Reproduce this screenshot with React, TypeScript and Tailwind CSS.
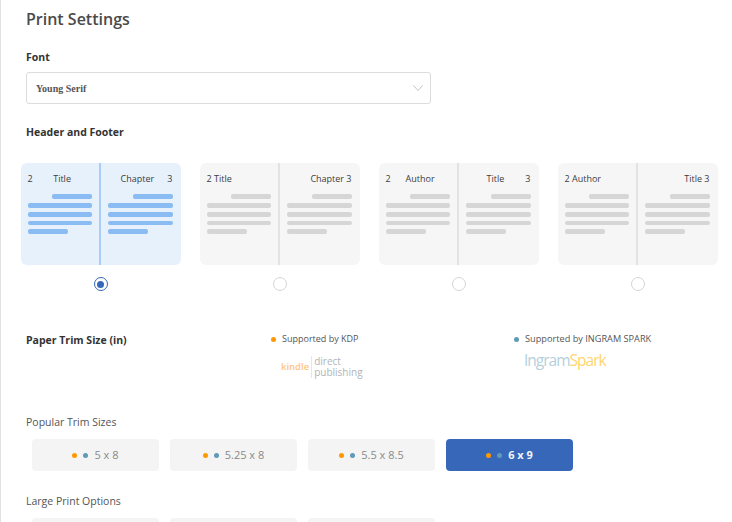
const font = { fontFamily: '"Open Sans", "Noto Sans", sans-serif' };

function Page({ side, a, b, c, bar }: { side: "l" | "r"; a: string; b: string; c: string; bar: string }) {
  const line = `h-[5px] rounded-[2px] ${bar}`;
  return (
    <div className={`flex flex-col ${side === "l" ? "w-[64px]" : "w-[65px]"}`}>
      <div className="flex h-[16px] items-center justify-between text-[9px] leading-none text-[#3d3d3d]">
        <span>{a}</span>
        <span>{b}</span>
        <span>{c}</span>
      </div>
      <div className="mt-[8px] flex flex-col gap-[4px]">
        <div className={`${line} ml-auto w-[40px]`} />
        <div className={line} />
        <div className={line} />
        <div className={`h-[4px] rounded-[2px] ${bar}`} />
        <div className={`${line} w-[40px]`} />
      </div>
    </div>
  );
}

function Card({ left, right, active }: { left: [string, string, string]; right: [string, string, string]; active?: boolean }) {
  const bar = active ? "bg-[#8abbf3]" : "bg-[#d6d6d6]";
  return (
    <div className="flex w-[160px] flex-col items-center">
      <div className={`flex h-[102px] w-[160px] rounded-[6px] ${active ? "bg-[#e6f1fc]" : "bg-[#f6f6f6]"}`}>
        <div className="flex w-[78px] justify-end pr-[7px] pt-[7px]">
          <Page side="l" a={left[0]} b={left[1]} c={left[2]} bar={bar} />
        </div>
        <div className={`w-[2px] ${active ? "bg-[#a9cdf5]" : "bg-[#e3e3e3]"}`} />
        <div className="flex flex-1 pl-[7px] pt-[7px]">
          <Page side="r" a={right[0]} b={right[1]} c={right[2]} bar={bar} />
        </div>
      </div>
      <div className={`mt-[12px] flex h-[14px] w-[14px] items-center justify-center rounded-full border ${active ? "border-[#3667b8]" : "border-[#d4d4d4]"}`}>
        {active && <div className="h-[7px] w-[7px] rounded-full bg-[#3667b8]" />}
      </div>
    </div>
  );
}

function Trim({ label, active, bare }: { label?: string; active?: boolean; bare?: boolean }) {
  return (
    <div className={`flex h-[32px] w-[127px] items-center justify-center rounded-[4px] ${active ? "bg-[#3667b8]" : "bg-[#f4f4f4]"}`}>
      {!bare && (
        <>
          <span className="h-[5px] w-[5px] rounded-full bg-[#ff9900]" />
          <span className="ml-[6px] h-[5px] w-[5px] rounded-full bg-[#5f9ab8]" />
          <span className={`ml-[6px] text-[11px] ${active ? "font-bold text-[#f0f4fb]" : "text-[#8a8a8a]"}`}>{label}</span>
        </>
      )}
    </div>
  );
}

export default function App() {
  return (
    <div style={font} className="h-[522px] w-[732px] overflow-hidden border-l border-[#e2e2e2] bg-white text-[#333]">
      <h1 className="ml-[25px] mt-[8px] text-[16px] font-semibold leading-[22px] text-[#4a4a4a]">Print Settings</h1>

      <p className="ml-[25px] mt-[19px] text-[10.5px] font-bold leading-[16px] text-[#333]">Font</p>
      <div className="ml-[25px] mt-[7px] flex h-[32px] w-[405px] items-center justify-between rounded-[3px] border border-[#dcdcdc] pl-[9px] pr-[7px]">
        <span className="text-[10px] font-bold text-[#555]" style={{ fontFamily: '"Liberation Serif", serif' }}>Young Serif</span>
        <svg width="10" height="6" viewBox="0 0 10 6" fill="none" stroke="#c4c4c4" strokeWidth="1">
          <path d="M0.5 0.5 L5 5.5 L9.5 0.5" />
        </svg>
      </div>

      <p className="ml-[25px] mt-[20px] text-[10.5px] font-bold leading-[16px] text-[#333]">Header and Footer</p>

      <div className="ml-[19.5px] mt-[23px] flex gap-[19px]">
        <Card active left={["2", "Title", ""]} right={["", "Chapter", "3"]} />
        <Card left={["2 Title", "", ""]} right={["", "", "Chapter 3"]} />
        <Card left={["2", "Author", ""]} right={["", "Title", "3"]} />
        <Card left={["2 Author", "", ""]} right={["", "", "Title 3"]} />
      </div>

      <div className="mt-[41px] flex h-[48px]">
        <p className="ml-[25px] w-[245px] text-[10.5px] font-bold leading-[16px] text-[#333]">Paper Trim Size (in)</p>
        <div className="w-[243px]">
          <div className="flex h-[14px] items-center">
            <span className="h-[5px] w-[5px] rounded-full bg-[#ff9900]" />
            <span className="ml-[6px] text-[9px] text-[#555]">Supported by KDP</span>
          </div>
          <div className="ml-[10px] mt-[9px] flex h-[24px] items-center">
            <span className="text-[9.5px] font-semibold text-[#ffc67a]">kindle</span>
            <span className="ml-[2px] mr-[2px] h-[22px] w-px bg-[#e6e6e6]" />
            <span className="flex flex-col text-[10px] leading-[11px] text-[#b0b4b8]">
              <span>direct</span>
              <span>publishing</span>
            </span>
          </div>
        </div>
        <div>
          <div className="flex h-[14px] items-center">
            <span className="h-[5px] w-[5px] rounded-full bg-[#5f9ab8]" />
            <span className="ml-[6px] text-[9.2px] text-[#555]">Supported by INGRAM SPARK</span>
          </div>
          <div className="ml-[10px] mt-[3px] flex h-[24px] items-center text-[15.5px] tracking-[-1px]">
            <span className="text-[#b4d0de]">Ingram</span>
            <span className="text-[#ffd66e]">Spark</span>
          </div>
        </div>
      </div>

      <p className="ml-[25px] mt-[34px] text-[10.5px] leading-[16px] text-[#555]">Popular Trim Sizes</p>
      <div className="ml-[31px] mt-[9px] flex gap-[11px]">
        <Trim label="5 x 8" />
        <Trim label="5.25 x 8" />
        <Trim label="5.5 x 8.5" />
        <Trim label="6 x 9" active />
      </div>

      <p className="ml-[25px] mt-[22px] text-[10.5px] leading-[16px] text-[#555]">Large Print Options</p>
      <div className="ml-[31px] mt-[9px] flex gap-[11px]">
        <Trim bare />
        <Trim bare />
        <Trim bare />
      </div>
    </div>
  );
}
